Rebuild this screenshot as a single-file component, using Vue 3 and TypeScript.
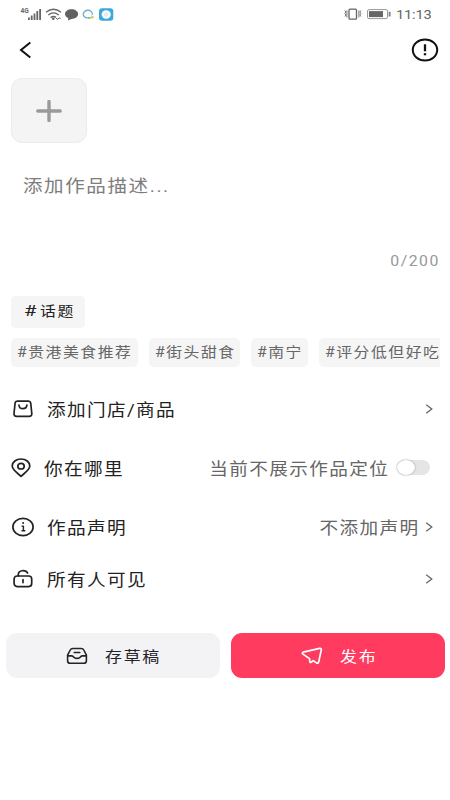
<script setup lang="ts">
import { ref } from 'vue'

interface Row {
  icon: 'bag' | 'pin' | 'info' | 'lock'
  label: string
  value?: string
  toggle?: boolean
}

const rows: Row[] = [
  { icon: 'bag', label: '添加门店/商品' },
  { icon: 'pin', label: '你在哪里', value: '当前不展示作品定位', toggle: true },
  { icon: 'info', label: '作品声明', value: '不添加声明' },
  { icon: 'lock', label: '所有人可见' },
]
const tags = ['#贵港美食推荐', '#街头甜食', '#南宁', '#评分低但好吃']
const showLocation = ref(false)
</script>

<template>
  <div class="page">
    <div class="status">
      <svg class="status-left" width="96" height="16" viewBox="0 0 96 16">
        <text x="0.500" y="7" class="net">4G</text>
        <g fill="#666">
          <rect x="8" y="11.500" width="1.800" height="2.500" /><rect x="10.800" y="9.500" width="1.800" height="4.500" />
          <rect x="13.600" y="7.500" width="1.800" height="6.500" /><rect x="16.400" y="5" width="1.800" height="9" />
          <rect x="19.200" y="3" width="1.800" height="11" />
        </g>
        <g fill="none" stroke="#666" stroke-width="1.400">
          <path d="M26 6.300Q33.500 0.300 41 6.300" /><path d="M28.300 9Q33.500 4.800 38.700 9" /><path d="M30.600 11.600Q33.500 9.400 36 11.400" />
        </g>
        <circle cx="33.300" cy="12.800" r="1.300" fill="#666" />
        <path d="M36.200 12l1.200 1.500 1.200-1.500M38.300 13l1.200-1.300 1 1.300" stroke="#666" fill="none" />
        <path d="M51.500 3.300c3.800 0 6.600 2.100 6.600 4.800s-2.800 4.800-6.600 4.800l-3.600 1.500.4-2.200C46.200 11.300 45 9.900 45 8.100 45 5.400 47.800 3.300 51.500 3.300z" fill="#626262" />
        <path d="M72.500 8.700C72.500 6 70.300 4.300 68 4.300c-2.700 0-4.700 1.800-4.700 3.900 0 2.300 1.900 3.800 4.700 3.700" fill="none" stroke="#6bb0cf" stroke-width="1.400" />
        <path d="M68 11.900h2.700" stroke="#58bc91" stroke-width="1.600" /><path d="M70.800 9.300l3.600 1.700-2.800 2.300z" fill="#e8bf59" />
        <rect x="79" y="2.200" width="14.300" height="12.600" rx="3" fill="#3aa9dc" />
        <ellipse cx="86.200" cy="8.500" rx="4.600" ry="4.200" fill="#fff" /><circle cx="86.200" cy="8.500" r="2.200" fill="#e0eff5" />
      </svg>
      <div class="status-right">
        <svg width="48" height="14" viewBox="0 0 48 14">
          <rect x="5" y="2.200" width="7.500" height="10" rx="1" fill="none" stroke="#666" stroke-width="1.300" />
          <path d="M.9 3.500l1 1.500-1 1.500 1 1.500-1 1.500M2.900 3.500v7M14.900 3.500v7M16.900 3.500l-1 1.500 1 1.500-1 1.500 1 1.500" fill="none" stroke="#777" stroke-width="1" />
          <rect x="23.500" y="2.600" width="20" height="9" rx="1.500" fill="#fff" stroke="#999" />
          <rect x="25" y="4.100" width="14" height="6" fill="#666" />
          <rect x="44.600" y="4.700" width="2" height="4.800" fill="#888" />
        </svg>
        <span class="time wide">11:13</span>
      </div>
    </div>

    <header class="nav">
      <svg width="14" height="18" viewBox="0 0 14 18"><path d="M11.300 1.500L2 9l9.300 7.500" fill="none" stroke="#111" stroke-width="2" /></svg>
      <svg width="28" height="24" viewBox="0 0 28 24">
        <ellipse cx="14" cy="12" rx="12.200" ry="10.500" fill="none" stroke="#111" stroke-width="2" />
        <path d="M14 6.300v7" stroke="#111" stroke-width="2.300" /><rect x="12.800" y="15.200" width="2.400" height="2.100" fill="#111" />
      </svg>
    </header>

    <button class="upload" aria-label="+">
      <svg width="26" height="22" viewBox="0 0 26 22"><path d="M13 1.500v19M1.800 11h22.400" stroke="#999a9c" stroke-width="3.400" stroke-linecap="round" /></svg>
    </button>

    <div class="desc"><span class="wide">添加作品描述...</span></div>
    <div class="count"><span class="wide">0/200</span></div>

    <div class="topic"><span class="hash">#</span><span class="wide">话题</span></div>
    <div class="tags">
      <div v-for="(tag, i) in tags" :key="tag" class="tag" :class="'tag-' + i"><span class="wide">{{ tag }}</span></div>
    </div>

    <main class="rows">
      <div v-for="row in rows" :key="row.icon" class="row" :class="row.icon">
        <svg class="row-icon" width="24" height="22" viewBox="0 0 24 22" fill="none" stroke="#222" stroke-width="1.700" stroke-linecap="round" stroke-linejoin="round">
          <template v-if="row.icon === 'bag'">
            <path d="M6.300 3.100h11.200q1.900 0 2.200 1.900l1.100 10.500q.2 2.900-2.700 2.900H5.700q-2.900 0-2.700-2.900L4.100 5q.3-1.900 2.200-1.900z" />
            <path d="M8 7.200c.4 4.600 7.400 4.600 7.900 0" />
          </template>
          <template v-else-if="row.icon === 'pin'">
            <path d="M12 19.300C8 15.800 3.200 12.800 3.200 9.100c0-4.200 3.900-7.100 8.800-7.100s8.800 2.900 8.800 7.100c0 3.700-4.800 6.700-8.800 10.200z" />
            <ellipse cx="12" cy="9.200" rx="3.200" ry="2.800" />
          </template>
          <template v-else-if="row.icon === 'info'">
            <ellipse cx="12" cy="11" rx="10.100" ry="8.600" />
            <path d="M11 10.100h1.400v4.600M11 14.700h2.800" stroke-width="1.400" /><path d="M12.100 7v.1" stroke-width="2" />
          </template>
          <template v-else>
            <rect x="3.100" y="8" width="17.600" height="10.600" rx="3" />
            <path d="M7.300 7.800V6.500c0-4.500 7.500-5 9.200-1.500M12 11.700v2.900" />
          </template>
        </svg>
        <span class="label wide">{{ row.label }}</span>
        <span v-if="row.value" class="value wide">{{ row.value }}</span>
        <button v-if="row.toggle" class="switch" :class="{ on: showLocation }" @click="showLocation = !showLocation"><i></i></button>
        <svg v-else class="chev" width="8" height="12" viewBox="0 0 8 12"><path d="M1.200 1.700L6.800 6l-5.600 4.300" fill="none" stroke="#666" stroke-width="1.300" /></svg>
      </div>
    </main>

    <footer class="actions">
      <button class="draft">
        <svg width="22" height="18" viewBox="0 0 22 18" fill="none" stroke="#242428" stroke-width="1.600" stroke-linejoin="round" stroke-linecap="round">
          <path d="M6.800 1.500h8.400q1.900 0 2.600 1.500l2.600 5.200v5.500q0 2.600-2.600 2.600H4.200q-2.600 0-2.600-2.600V8.200L4.200 3q.7-1.500 2.600-1.500z" />
          <path d="M1.800 8.900h3.800q1.400 0 2.300 1.400 3.100 2.200 6.200 0 .9-1.400 2.300-1.400h3.800M8.200 5.500h5.600" />
        </svg>
        <span class="wide">存草稿</span>
      </button>
      <button class="publish">
        <svg width="22" height="18" viewBox="0 0 22 18" fill="none" stroke="#fff" stroke-width="1.700" stroke-linejoin="round" stroke-linecap="round">
          <path d="M2.200 5.200L18.600 1.300q2-.3 1.700 1.500l-2.600 12.300q-.5 1.700-2.200.8l-3.300-2.200-2.100 1.600q-1.100.6-1.300-.7l-.3-3L2 7.100Q.7 5.800 2.200 5.200z" />
        </svg>
        <span class="wide">发布</span>
      </button>
    </footer>
  </div>
</template>

<style>
body { margin: 0; background: #fff; }
</style>

<style scoped>
.page { width: 450px; height: 800px; overflow: hidden; background: #fff; display: flex; flex-direction: column; font-family: Roboto, "Noto Sans CJK SC", sans-serif; color: #222; }
button { border: 0; padding: 0; font: inherit; }
svg { display: block; flex: none; }
.wide { display: inline-block; white-space: nowrap; transform: scaleX(1.13); transform-origin: left center; }
.status { height: 28px; display: flex; justify-content: space-between; align-items: center; padding: 0 18px 0 20px; box-sizing: border-box; }
.net { font: bold 6.500px Roboto, sans-serif; fill: #666; }
.status-right { display: flex; gap: 4px; align-items: center; color: #666; font-size: 13px; }
.time { width: 36px; letter-spacing: -0.200px; }
.nav { height: 44px; display: flex; justify-content: space-between; align-items: center; padding: 0 11px 0 19px; }
.upload { width: 76px; height: 65px; margin: 6px 0 0 11px; border-radius: 11px; background: #f4f4f5; border: 1px solid #ebebec; display: flex; align-items: center; justify-content: center; }
.desc { height: 28px; line-height: 28px; margin: 29px 0 0 22.500px; font-size: 17.300px; letter-spacing: 1.400px; color: #7d7d7d; }
.count { height: 20px; line-height: 20px; margin-top: 51px; padding-right: 10px; text-align: right; font-size: 14px; letter-spacing: 1.300px; color: #999; }
.count .wide { transform-origin: right center; }
.topic { width: 74px; height: 32px; line-height: 31px; margin: 25px 0 0 11px; padding-left: 13px; box-sizing: border-box; border-radius: 5px; background: #f5f5f5; font-size: 14px; letter-spacing: 1.400px; display: flex; }
.hash { width: 15.500px; letter-spacing: 0; transform: scaleX(1.450); transform-origin: left center; flex: none; width: 16px; }
.tags { display: flex; gap: 11px; width: 429px; height: 29px; margin: 10px 0 0 11px; overflow: hidden; }
.tag { flex: none; height: 29px; line-height: 29px; padding-left: 5.500px; box-sizing: border-box; border-radius: 5px; background: #f5f5f5; color: #666; font-size: 14px; letter-spacing: 1.350px; }
.tag-0 { width: 127px; }
.tag-1 { width: 91px; }
.tag-2 { width: 57px; }
.tag-3 { width: 140px; }
.rows { display: flex; flex-direction: column; margin-top: 12px; }
.row { display: flex; align-items: center; height: 59px; padding: 0 17px 0 11px; font-size: 16.500px; letter-spacing: 1.200px; }
.row.lock { height: 45px; }
.label { margin-left: 11.500px; }
.pin { padding-left: 9px; padding-right: 20px; }
.pin .label { margin-left: 11px; }
.value { margin-left: auto; color: #666; transform-origin: right center; }
.value + .chev { margin-left: 6px; }
.label + .chev { margin-left: auto; }
.switch { width: 33px; height: 15px; margin-left: 8px; border-radius: 8px; background: #e5e5e5; display: flex; align-items: center; }
.switch i { width: 18px; height: 15px; border-radius: 50%; background: #fff; box-shadow: 0 0 2px #888; }
.switch.on { justify-content: flex-end; background: #fe3b5f; }
.actions { display: grid; grid-template-columns: 214px 214px; gap: 11px; margin: 32px 0 0 6px; }
.actions button { height: 45px; border-radius: 11px; display: flex; align-items: center; font-size: 15px; letter-spacing: 1.500px; }
.actions .wide { margin-top: -1px; }
.draft { background: #f3f3f5; color: #242428; padding-left: 60px; gap: 17px; }
.publish { background: #ff3b60; color: #fff; padding-left: 70px; gap: 17px; }
</style>
